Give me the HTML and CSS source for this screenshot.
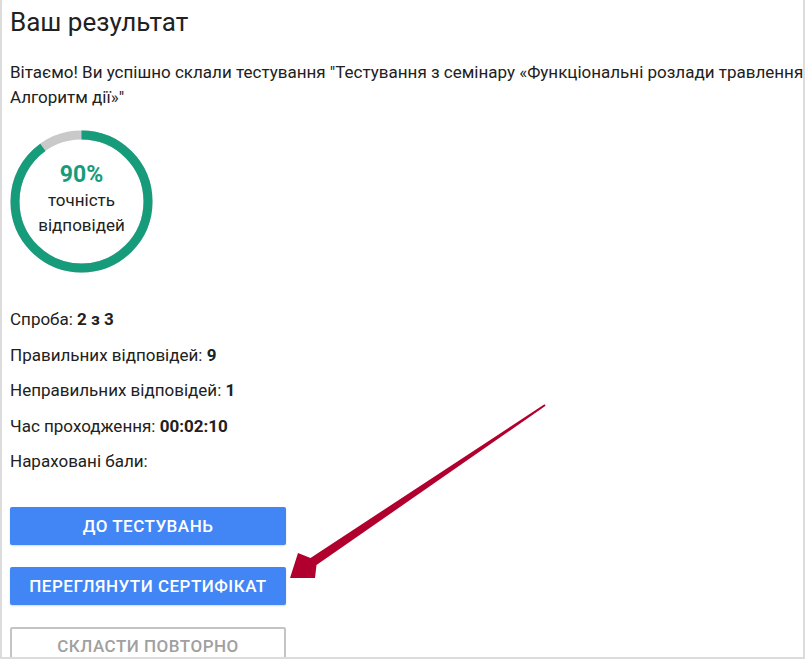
FILE: index.html
```html
<!DOCTYPE html>
<html lang="uk">
<head>
  <meta charset="UTF-8">
  <meta name="viewport" content="width=device-width, initial-scale=1.0">
  <title>Ваш результат</title>
  <link rel="stylesheet" href="styles.css">
</head>
<body>

  <div class="frame">
    <div class="result">
      <h2 class="result-title">Ваш результат</h2>
      <p class="result-text">Вітаємо! Ви успішно склали тестування "Тестування з семінару «Функціональні розлади травлення Алгоритм дії»"</p>

      <div class="score">
        <svg class="score-ring" viewBox="0 0 143 143" width="143" height="143">
          <circle cx="71.5" cy="71.5" r="66.5" fill="none" stroke="#c9c9c9" stroke-width="9"/>
          <circle cx="71.5" cy="71.5" r="66.5" fill="none" stroke="#169c7b" stroke-width="9"
                  stroke-dasharray="376 418" transform="rotate(-90 71.5 71.5)"/>
        </svg>
        <div class="score-label">
          <span class="score-value">90%</span>
          <span class="score-caption">точність<br>відповідей</span>
        </div>
      </div>

      <div class="stats">
        <p>Спроба: <b>2 з 3</b></p>
        <p>Правильних відповідей: <b>9</b></p>
        <p>Неправильних відповідей: <b>1</b></p>
        <p>Час проходження: <b>00:02:10</b></p>
        <p>Нараховані бали:</p>
      </div>

      <div class="actions">
        <button class="btn btn-primary">До тестувань</button>
        <button class="btn btn-primary">Переглянути сертифікат</button>
        <button class="btn btn-outline">Скласти повторно</button>
      </div>
    </div>

    <svg class="pointer" width="805" height="659" viewBox="0 0 805 659">
      <polygon fill="#b2002e"
        points="290,578 315,578 316.5,565 545.6,405.8 544.5,404.2 310.5,558 298,553"/>
    </svg>
  </div>

</body>
</html>
```

FILE: styles.css
```css
* {
  box-sizing: border-box;
}

body {
  margin: 0;
  background: #fff;
  font-family: Roboto, "Noto Sans", sans-serif;
  color: #212121;
}

.frame {
  position: relative;
  width: 805px;
  height: 659px;
  border: 2px solid #dcdcdc;
  border-top: none;
  overflow: hidden;
}

.result {
  padding-left: 8px;
  width: 840px;
}

.result-title {
  margin: 7px 0 0;
  font-size: 26px;
  line-height: 30px;
  font-weight: 400;
}

.result-text {
  margin: 23px 0 0;
  font-size: 17px;
  line-height: 25px;
  width: 830px;
}

.score {
  display: grid;
  width: 143px;
  height: 143px;
  margin-top: 20px;
}

.score-ring,
.score-label {
  grid-area: 1 / 1;
}

.score-label {
  display: flex;
  flex-direction: column;
  align-items: center;
  justify-content: center;
  text-align: center;
  padding-bottom: 5px;
}

.score-value {
  font-size: 23px;
  line-height: 27px;
  font-weight: 700;
  color: #169c7b;
}

.score-caption {
  font-size: 17px;
  line-height: 25px;
}

.stats {
  margin-top: 34px;
}

.stats p {
  margin: 0 0 11.5px;
  font-size: 17px;
  line-height: 24px;
}

.stats b {
  font-weight: 700;
}

.actions {
  display: flex;
  flex-direction: column;
  gap: 22px;
  margin-top: 34px;
}

.btn {
  width: 276px;
  height: 38px;
  border-radius: 2px;
  font-family: Roboto, "Noto Sans", sans-serif;
  font-size: 17px;
  font-weight: 500;
  letter-spacing: 0.5px;
  text-transform: uppercase;
  cursor: pointer;
}

.btn-primary {
  background-color: #4286f5;
  color: #fff;
  border: none;
  box-shadow: 0 1px 2px rgba(0, 0, 0, 0.15);
}

.btn-outline {
  background: #fff;
  color: #a0a0a0;
  border: 2px solid #c4c4c4;
}

.pointer {
  position: absolute;
  top: 0;
  left: -2px;
  pointer-events: none;
}
```
